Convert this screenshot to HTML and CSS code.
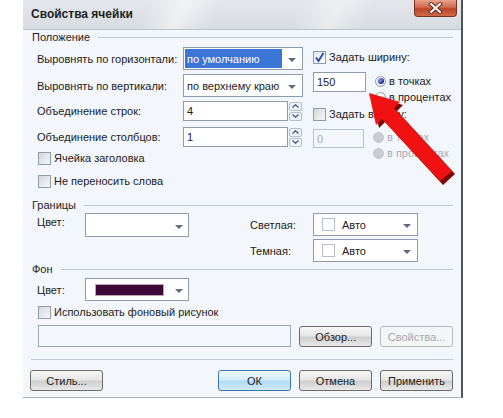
FILE: index.html
```html
<!DOCTYPE html>
<html lang="ru">
<head>
  <meta charset="UTF-8" />
  <meta name="viewport" content="width=device-width, initial-scale=1.0" />
  <title>Свойства ячейки</title>
  <link rel="stylesheet" href="styles.css">
</head>
<body>
  <div class="window">
    <div class="titlebar">
      <span class="title">Свойства ячейки</span>
      <span class="close">
        <svg width="17" height="12" viewBox="0 0 17 12">
          <path d="M4 2 L13 10 M13 2 L4 10" stroke="#6a2a18" stroke-width="4" stroke-linecap="square" />
          <path d="M4 2 L13 10 M13 2 L4 10" stroke="#fff" stroke-width="2" stroke-linecap="square" />
        </svg>
      </span>
    </div>

    <div class="content">
      <div class="group">Положение</div>
      <div class="pos">
        <div class="pos-left">
          <div class="field">
            <span class="field-label">Выровнять по горизонтали:</span>
            <div class="select"><span class="value selected">по умолчанию</span><span class="drop"></span></div>
          </div>
          <div class="field">
            <span class="field-label">Выровнять по вертикали:</span>
            <div class="select"><span class="value">по верхнему краю</span><span class="drop"></span></div>
          </div>
          <div class="field short">
            <span class="field-label">Объединение строк:</span>
            <div class="input wide">4</div>
            <span class="spin">
              <span class="spin-btn"><svg width="7" height="4" viewBox="0 0 7 4"><path d="M0.5 3.5 L3.5 0.8 L6.5 3.5" fill="none" stroke="#3d5479" stroke-width="1.2" /></svg></span>
              <span class="spin-btn"><svg width="7" height="4" viewBox="0 0 7 4"><path d="M0.5 0.5 L3.5 3.2 L6.5 0.5" fill="none" stroke="#3d5479" stroke-width="1.2" /></svg></span>
            </span>
          </div>
          <div class="field short">
            <span class="field-label">Объединение столбцов:</span>
            <div class="input wide">1</div>
            <span class="spin">
              <span class="spin-btn"><svg width="7" height="4" viewBox="0 0 7 4"><path d="M0.5 3.5 L3.5 0.8 L6.5 3.5" fill="none" stroke="#3d5479" stroke-width="1.2" /></svg></span>
              <span class="spin-btn"><svg width="7" height="4" viewBox="0 0 7 4"><path d="M0.5 0.5 L3.5 3.2 L6.5 0.5" fill="none" stroke="#3d5479" stroke-width="1.2" /></svg></span>
            </span>
          </div>
          <div class="check"><span class="box"></span>Ячейка заголовка</div>
          <div class="check"><span class="box"></span>Не переносить слова</div>
        </div>

        <div class="pos-right">
          <div class="check">
            <span class="box checked"><svg width="11" height="11" viewBox="0 0 11 11"><path d="M2 5.5 L4.5 9 L9.5 1" fill="none" stroke="#3150a6" stroke-width="2" /></svg></span>
            Задать ширину:
          </div>
          <div class="size-row">
            <div class="input small">150</div>
            <div class="radios">
              <div class="radio-row"><span class="radio on"></span>в точках</div>
              <div class="radio-row"><span class="radio"></span>в процентах</div>
            </div>
          </div>
          <div class="check"><span class="box"></span>Задать высоту:</div>
          <div class="size-row low">
            <div class="input small disabled">0</div>
            <div class="radios">
              <div class="radio-row disabled"><span class="radio"></span>в точках</div>
              <div class="radio-row disabled"><span class="radio"></span>в процентах</div>
            </div>
          </div>
        </div>
      </div>

      <div class="group borders-title">Границы</div>
      <div class="borders">
        <span class="color-label">Цвет:</span>
        <div class="select color"><span class="value"></span><span class="drop"></span></div>
        <span class="side-label light">Светлая:</span>
        <div class="select auto light"><span class="value"><span class="swatch"></span>Авто</span><span class="drop"></span></div>
        <span class="side-label dark">Темная:</span>
        <div class="select auto dark"><span class="value"><span class="swatch"></span>Авто</span><span class="drop"></span></div>
      </div>

      <div class="group">Фон</div>
      <div class="bg-row">
        <span class="color-label">Цвет:</span>
        <div class="select color"><span class="value"><span class="fill"></span></span><span class="drop"></span></div>
      </div>
      <div class="check bg-check"><span class="box"></span>Использовать фоновый рисунок</div>
      <div class="file-row">
        <div class="input path"></div>
        <button class="btn">Обзор...</button>
        <button class="btn" disabled>Свойства...</button>
      </div>

      <div class="sep"></div>

      <div class="footer">
        <button class="btn style">Стиль...</button>
        <span class="spacer"></span>
        <button class="btn default">ОК</button>
        <button class="btn">Отмена</button>
        <button class="btn">Применить</button>
      </div>
    </div>
  </div>

  <svg class="pointer" width="503" height="418" viewBox="0 0 503 418">
    <polygon points="372,96 403,105 397,111 455,174 443,185 385,122 379,128" fill="#7c0606" />
    <polygon points="369,93 400,102 394,108 452,171 440,181 382,119 376,125" fill="#f01212" />
  </svg>
</body>
</html>
```

FILE: styles.css
```css
* {
  box-sizing: border-box;
}
body {
  margin: 0;
  background: #fff;
  font-family: "Liberation Sans", Arial, sans-serif;
  font-size: 11px;
  color: #1c1c1c;
}
.window {
  margin-left: 23px;
  width: 440px;
  height: 398px;
  background: #f3f6fa;
  border-right: 2px solid #4f5459;
  border-bottom: 1px solid #a6afbb;
}

/* title bar */
.titlebar {
  display: flex;
  align-items: flex-start;
  height: 30px;
  padding-left: 8px;
  border-bottom: 1px solid #bcc4ce;
  background:
    linear-gradient(115deg, rgba(255,255,255,0) 28%, rgba(255,255,255,.5) 36%, rgba(255,255,255,0) 44%, rgba(255,255,255,0) 62%, rgba(255,255,255,.4) 70%, rgba(255,255,255,0) 78%),
    linear-gradient(#e4e7eb, #d8dce1);
}
.title {
  margin-top: 7px;
  font-weight: bold;
  font-size: 12px;
  color: #1e1e1e;
}
.close {
  display: flex;
  align-items: center;
  justify-content: center;
  margin-left: auto;
  margin-right: 4px;
  width: 43px;
  height: 17px;
  border: 1px solid #7a3322;
  border-top: none;
  border-radius: 0 0 4px 4px;
  background: linear-gradient(#e7a28e, #d2694b 45%, #bd4526 55%, #cf6a48);
}

.content {
  padding: 0 8px;
}
.group {
  display: flex;
  align-items: center;
  gap: 8px;
  height: 14px;
  padding-left: 1px;
}
.group::after {
  content: "";
  flex: 1;
  height: 1px;
  background: #c3cad4;
}

/* position */
.pos {
  display: flex;
  height: 141px;
  margin-top: 3px;
}
.pos-left {
  width: 282px;
  padding-left: 6px;
}
.pos-right {
  width: 140px;
}
.field {
  display: flex;
  align-items: center;
  height: 23px;
}
.field + .field {
  margin-top: 4px;
}
.field.short {
  height: 20px;
}
.field.short + .field.short {
  margin-top: 6px;
}
.field-label {
  width: 146px;
  white-space: nowrap;
}

.select {
  display: flex;
  width: 120px;
  height: 23px;
  padding: 1px;
  border: 1px solid #8c9bb0;
  background: #fff;
}
.select .value {
  display: flex;
  align-items: center;
  flex: 1;
  padding-left: 2px;
  white-space: nowrap;
}
.select .value.selected {
  background: #3b76d6;
  color: #fff;
}
.drop {
  display: flex;
  align-items: center;
  justify-content: center;
  width: 19px;
}
.drop::before {
  content: "";
  margin-top: 3px;
  border-left: 4px solid transparent;
  border-right: 4px solid transparent;
  border-top: 4px solid #5f6c80;
}

.input {
  display: flex;
  align-items: center;
  height: 20px;
  padding-left: 3px;
  border: 1px solid #8c9bb0;
  background: #fff;
}
.input.wide {
  width: 105px;
}
.input.small {
  width: 53px;
}
.input.disabled {
  width: 51px;
  height: 19px;
  border-color: #b9c3cf;
  background: #f3f6fa;
  color: #a9afb7;
}
.spin {
  display: flex;
  flex-direction: column;
  gap: 1px;
  width: 13px;
  height: 19px;
  margin-left: 1px;
}
.spin-btn {
  display: flex;
  align-items: center;
  justify-content: center;
  flex: 1;
  border: 1px solid #b6bfcb;
  border-radius: 2px;
  background: #eef1f5;
}

.check {
  display: flex;
  align-items: center;
  gap: 3px;
  height: 14px;
  padding-left: 1px;
  white-space: nowrap;
}
.pos-left .check {
  margin-top: 4px;
}
.pos-left .check + .check {
  margin-top: 9px;
}
.pos-right .check {
  margin-top: 3px;
  padding-left: 0;
}
.pos-right .size-row + .check {
  margin-top: 2px;
}
.box {
  display: flex;
  align-items: center;
  justify-content: center;
  width: 13px;
  height: 13px;
  border: 1px solid #929dab;
  background: linear-gradient(135deg, #d3d6db, #f6f7f8);
}
.box.checked {
  background: linear-gradient(135deg, #e4e8ee, #ffffff);
}

.size-row {
  display: flex;
  margin-top: 8px;
}
.radios {
  margin-left: 9px;
  margin-top: 1px;
}
.size-row.low .radios {
  margin-top: 0;
}
.radio-row {
  display: flex;
  align-items: center;
  gap: 3px;
  height: 16px;
  white-space: nowrap;
}
.radio {
  display: flex;
  align-items: center;
  justify-content: center;
  width: 11px;
  height: 11px;
  border: 1px solid #939eac;
  border-radius: 50%;
  background: radial-gradient(circle at 40% 35%, #ffffff, #dde1e6);
}
.radio.on::after {
  content: "";
  width: 6px;
  height: 6px;
  border-radius: 50%;
  background: radial-gradient(circle at 35% 35%, #8a9cf0, #1b2a8c 70%);
}
.radio-row.disabled {
  color: #a7adb5;
}
.radio-row.disabled .radio {
  border-color: #c4c8cd;
  background: #c9ccd1;
}

/* borders */
.borders-title {
  margin-top: 10px;
}
.borders {
  display: grid;
  grid-template-columns: 48px 104px 61px 63px 105px;
  grid-template-rows: 23px 23px;
  row-gap: 3px;
  margin-top: 1px;
  padding-left: 6px;
}
.color-label {
  align-self: start;
  padding-top: 3px;
}
.side-label {
  grid-column: 4;
  align-self: center;
}
.side-label.dark,
.select.dark {
  grid-row: 2;
}
.select.light,
.select.dark {
  grid-column: 5;
}
.select.color {
  width: 104px;
  height: 24px;
}
.select.color .drop {
  width: 17px;
}
.select.auto {
  width: 105px;
}
.select.auto .value {
  gap: 7px;
  padding-left: 7px;
}
.select.auto .drop {
  width: 19px;
}
.swatch {
  width: 13px;
  height: 13px;
  border: 1px solid #b6bec9;
  background: #fff;
}

/* background */
.bg-row {
  display: flex;
  align-items: center;
  height: 23px;
  margin-top: 2px;
  padding-left: 6px;
}
.bg-row .color-label {
  width: 48px;
  align-self: center;
  padding-top: 0;
}
.bg-row .select.color {
  height: 23px;
}
.fill {
  width: 69px;
  height: 12px;
  margin-left: 6px;
  border: 1px solid #b9a6b6;
  background: #3c0838;
}
.bg-check {
  margin-top: 4px;
  padding-left: 7px;
}
.file-row {
  display: flex;
  align-items: flex-start;
  margin-top: 6px;
  padding-left: 7px;
}
.input.path {
  width: 254px;
  height: 22px;
  border-color: #9aa8ba;
  background: #f3f6fa;
}
.file-row .btn {
  margin-top: 1px;
  margin-left: 8px;
}

.btn {
  width: 73px;
  height: 21px;
  padding: 0;
  border: 1px solid #6c6c6c;
  border-radius: 3px;
  background: linear-gradient(#f7f7f7, #e6e6e6 45%, #cfcfcf 55%, #e9e9e9);
  font-family: inherit;
  font-size: 11px;
  color: #1c1c1c;
}
.btn:disabled {
  border-color: #b3b8bd;
  background: #f4f5f7;
  color: #a3a8ae;
}
.btn.default {
  border-color: #3a78a8;
  background: linear-gradient(#eef7fd, #d5ecfa 45%, #b2dcf5 55%, #cfeafa);
}
.btn + .btn {
  margin-left: 8px;
}

.sep {
  height: 1px;
  margin-top: 12px;
  background: #c3cad4;
}
.footer {
  display: flex;
  margin-top: 10px;
}
.btn.style {
  margin-left: -1px;
}
.spacer {
  flex: 1;
}

.pointer {
  position: absolute;
  top: 0;
  left: 0;
  pointer-events: none;
}
```
